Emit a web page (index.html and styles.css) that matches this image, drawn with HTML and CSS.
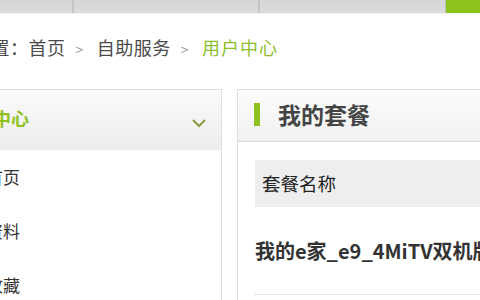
FILE: index.html
```html
<!DOCTYPE html>
<html lang="zh">
<head>
<meta charset="utf-8">
<link rel="stylesheet" href="styles.css">
</head>
<body>
<div class="topnav">
  <div class="tab t1"></div>
  <div class="tab t2"></div>
  <div class="tab t3"></div>
  <div class="tab on"></div>
</div>
<div class="crumb">位置：首页<span class="sep">&gt;</span>自助服务<span class="sep">&gt;</span><span class="cur">用户中心</span></div>
<div class="main">
  <div class="side">
    <div class="side-head">
      <span class="side-title">用户中心</span>
      <svg class="chev" width="16" height="10" viewBox="0 0 16 10"><path d="M2 2 L8 8 L14 2" fill="none" stroke="#8c9a3c" stroke-width="2"/></svg>
    </div>
    <div class="side-item">首页</div>
    <div class="side-item">资料</div>
    <div class="side-item">收藏</div>
  </div>
  <div class="content">
    <div class="c-head"><span class="bar"></span><span class="c-title">我的套餐</span></div>
    <div class="c-body">
      <div class="th">套餐名称</div>
      <div class="row">我的e家_e9_4MiTV双机版套餐</div>
    </div>
  </div>
</div>
</body>
</html>
```
FILE: styles.css
```css
html, body {
  margin: 0;
  padding: 0;
}
body {
  width: 480px;
  height: 300px;
  overflow: hidden;
  background: #fff;
  font-family: "Noto Sans CJK SC", "Liberation Sans", sans-serif;
}
.topnav {
  display: flex;
  height: 13px;
  background: #d9d9d9;
  border-bottom: 1px solid #f2f2f2;
}
.tab {
  height: 13px;
  background: linear-gradient(#d6d6d6, #dcdcdc);
  box-sizing: border-box;
}
.t1 { width: 74px; border-right: 2px solid #c4c4c4; }
.t2 { width: 186px; border-right: 2px solid #c4c4c4; }
.t3 { width: 186px; border-right: 1px solid #bfbfbf; }
.on { flex: 1; background: #8dc41c; }
.crumb {
  margin: 21px 0 0 -27px;
  height: 24px;
  line-height: 24px;
  font-size: 18px;
  letter-spacing: 0.5px;
  color: #4a4a4a;
  white-space: nowrap;
}
.sep {
  color: #999;
  font-size: 14px;
  margin: 0 13px 0 10px;
}
.cur { color: #8cbf2a; letter-spacing: 1px; }
.main {
  display: flex;
  margin-top: 30px;
  gap: 15px;
}
.side {
  flex: none;
  margin-left: -60px;
  width: 280px;
  height: 260px;
  border: 1px solid #dedede;
  border-bottom: none;
}
.side-head {
  height: 60px;
  display: flex;
  align-items: center;
  justify-content: space-between;
  padding: 0 14px 0 16px;
  background: linear-gradient(#fbfbfb, #ececec);
}
.side-title {
  font-size: 18px;
  color: #8fc11f;
  font-weight: bold;
  margin-top: -4px;
}
.chev { margin-top: 6px; }
.side-item {
  height: 54px;
  line-height: 54px;
  padding-left: 45px;
  font-size: 17px;
  color: #333;
}
.content {
  flex: none;
  width: 300px;
  height: 260px;
  border: 1px solid #dedede;
  border-bottom: none;
  border-right: none;
}
.c-head {
  height: 52px;
  box-sizing: border-box;
  border-bottom: 1px solid #d8d8d8;
  display: flex;
  align-items: center;
  padding-left: 16px;
  background: linear-gradient(#fcfcfc, #f1f1f1);
}
.bar {
  width: 6px;
  height: 23px;
  background: #8dc21f;
  margin-right: 18px;
  margin-top: -3px;
}
.c-title {
  font-size: 23px;
  font-weight: bold;
  color: #444;
  margin-top: -4px;
}
.c-body {
  padding: 18px 0 0 17px;
}
.th {
  height: 47px;
  line-height: 47px;
  background: #eeeeee;
  padding-left: 7px;
  font-size: 18.5px;
  color: #222;
}
.row {
  height: 87px;
  line-height: 87px;
  border-bottom: 1px dotted #c8c8c8;
  font-size: 20px;
  font-weight: bold;
  color: #333;
  white-space: nowrap;
  overflow: hidden;
}
```
